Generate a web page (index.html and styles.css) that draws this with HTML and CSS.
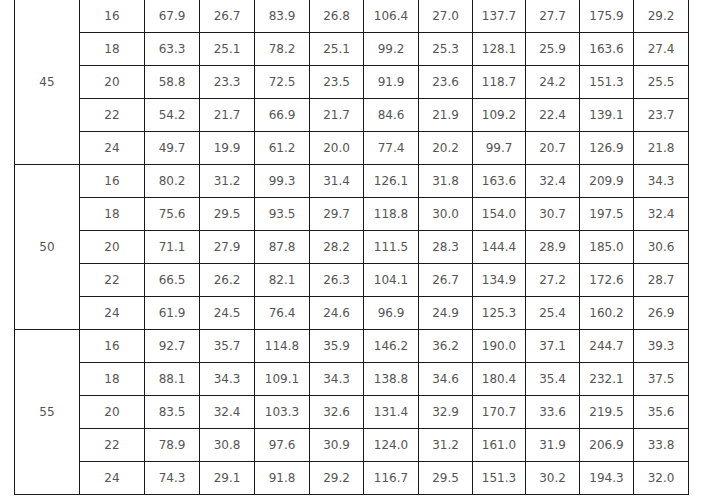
FILE: index.html
```html
<!DOCTYPE html>
<html>
<head>
<meta charset="utf-8">
<link rel="stylesheet" href="styles.css">
</head>
<body>
<table class="grid">
<colgroup>
<col class="w65"><col class="w65"><col class="w55"><col class="w55"><col class="w55"><col class="w54"><col class="w55"><col class="w54"><col class="w53"><col class="w54"><col class="w54"><col class="w55">
</colgroup>
<tbody>
<tr class="first"><td rowspan="5">45</td><td>16</td><td>67.9</td><td>26.7</td><td>83.9</td><td>26.8</td><td>106.4</td><td>27.0</td><td>137.7</td><td>27.7</td><td>175.9</td><td>29.2</td></tr>
<tr><td>18</td><td>63.3</td><td>25.1</td><td>78.2</td><td>25.1</td><td>99.2</td><td>25.3</td><td>128.1</td><td>25.9</td><td>163.6</td><td>27.4</td></tr>
<tr><td>20</td><td>58.8</td><td>23.3</td><td>72.5</td><td>23.5</td><td>91.9</td><td>23.6</td><td>118.7</td><td>24.2</td><td>151.3</td><td>25.5</td></tr>
<tr><td>22</td><td>54.2</td><td>21.7</td><td>66.9</td><td>21.7</td><td>84.6</td><td>21.9</td><td>109.2</td><td>22.4</td><td>139.1</td><td>23.7</td></tr>
<tr><td>24</td><td>49.7</td><td>19.9</td><td>61.2</td><td>20.0</td><td>77.4</td><td>20.2</td><td>99.7</td><td>20.7</td><td>126.9</td><td>21.8</td></tr>
<tr><td rowspan="5">50</td><td>16</td><td>80.2</td><td>31.2</td><td>99.3</td><td>31.4</td><td>126.1</td><td>31.8</td><td>163.6</td><td>32.4</td><td>209.9</td><td>34.3</td></tr>
<tr><td>18</td><td>75.6</td><td>29.5</td><td>93.5</td><td>29.7</td><td>118.8</td><td>30.0</td><td>154.0</td><td>30.7</td><td>197.5</td><td>32.4</td></tr>
<tr><td>20</td><td>71.1</td><td>27.9</td><td>87.8</td><td>28.2</td><td>111.5</td><td>28.3</td><td>144.4</td><td>28.9</td><td>185.0</td><td>30.6</td></tr>
<tr><td>22</td><td>66.5</td><td>26.2</td><td>82.1</td><td>26.3</td><td>104.1</td><td>26.7</td><td>134.9</td><td>27.2</td><td>172.6</td><td>28.7</td></tr>
<tr><td>24</td><td>61.9</td><td>24.5</td><td>76.4</td><td>24.6</td><td>96.9</td><td>24.9</td><td>125.3</td><td>25.4</td><td>160.2</td><td>26.9</td></tr>
<tr><td rowspan="5">55</td><td>16</td><td>92.7</td><td>35.7</td><td>114.8</td><td>35.9</td><td>146.2</td><td>36.2</td><td>190.0</td><td>37.1</td><td>244.7</td><td>39.3</td></tr>
<tr><td>18</td><td>88.1</td><td>34.3</td><td>109.1</td><td>34.3</td><td>138.8</td><td>34.6</td><td>180.4</td><td>35.4</td><td>232.1</td><td>37.5</td></tr>
<tr><td>20</td><td>83.5</td><td>32.4</td><td>103.3</td><td>32.6</td><td>131.4</td><td>32.9</td><td>170.7</td><td>33.6</td><td>219.5</td><td>35.6</td></tr>
<tr><td>22</td><td>78.9</td><td>30.8</td><td>97.6</td><td>30.9</td><td>124.0</td><td>31.2</td><td>161.0</td><td>31.9</td><td>206.9</td><td>33.8</td></tr>
<tr><td>24</td><td>74.3</td><td>29.1</td><td>91.8</td><td>29.2</td><td>116.7</td><td>29.5</td><td>151.3</td><td>30.2</td><td>194.3</td><td>32.0</td></tr>
</tbody>
</table>
</body>
</html>
```
FILE: styles.css
```css
html, body {
  margin: 0;
  padding: 0;
  background: #ffffff;
}
.grid {
  margin-left: 14px;
  border-collapse: separate;
  border-spacing: 0;
  table-layout: fixed;
  width: 675px;
  border-left: 1px solid #1a1a1a;
  font-family: "DejaVu Sans", Verdana, sans-serif;
  font-size: 12px;
  color: #555555;
}
.grid td {
  box-sizing: border-box;
  height: 33px;
  padding: 0;
  text-align: center;
  vertical-align: middle;
  border-right: 1px solid #1a1a1a;
  border-bottom: 1px solid #1a1a1a;
}
.w65 { width: 65px; }
.w55 { width: 55px; }
.w54 { width: 54px; }
.w53 { width: 53px; }
```
